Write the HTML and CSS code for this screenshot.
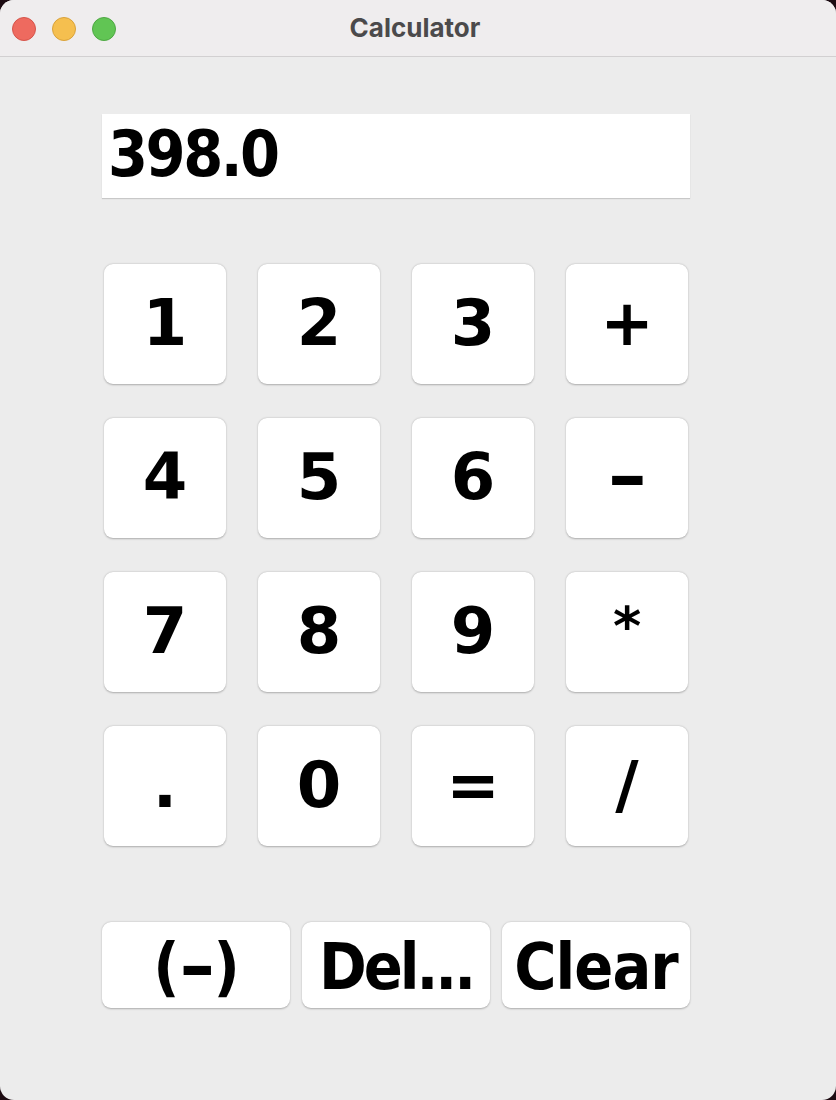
FILE: index.html
```html
<!DOCTYPE html>
<html lang="en">
<head>
<meta charset="utf-8">
<title>Calculator</title>
<link rel="stylesheet" href="styles.css">
</head>
<body>
<div class="window">
  <header class="titlebar">
    <div class="lights">
      <span class="light red"></span>
      <span class="light yellow"></span>
      <span class="light green"></span>
    </div>
    <div class="title">Calculator</div>
  </header>
  <main class="content">
    <div class="display">398.0</div>
    <div class="keypad">
      <button class="key">1</button>
      <button class="key">2</button>
      <button class="key">3</button>
      <button class="key">+</button>
      <button class="key">4</button>
      <button class="key">5</button>
      <button class="key">6</button>
      <button class="key"><span class="dash">-</span></button>
      <button class="key">7</button>
      <button class="key">8</button>
      <button class="key">9</button>
      <button class="key"><span class="star">*</span></button>
      <button class="key">.</button>
      <button class="key">0</button>
      <button class="key">=</button>
      <button class="key">/</button>
    </div>
    <div class="actions">
      <button class="action">(<span class="dash">-</span>)</button>
      <button class="action del">Del...</button>
      <button class="action">Clear</button>
    </div>
  </main>
</div>
</body>
</html>
```
FILE: styles.css
```css
html, body {
  margin: 0;
  padding: 0;
}
html {
  background: #1c0b12;
}
body {
  width: 836px;
  height: 1100px;
  overflow: hidden;
}
.window {
  width: 836px;
  height: 1100px;
  background: #ececec;
  border-radius: 14px;
  overflow: hidden;
  display: flex;
  flex-direction: column;
}
.titlebar {
  height: 56px;
  flex: none;
  background: #efedee;
  border-bottom: 1px solid #d2d0d1;
  display: flex;
  align-items: center;
  position: relative;
}
.lights {
  display: flex;
  gap: 16px;
  padding-left: 12px;
  padding-top: 1px;
}
.light {
  width: 22px;
  height: 22px;
  border-radius: 50%;
  border: 1px solid rgba(0,0,0,0.12);
}
.red { background: #ee6a5f; border-color: #d5544a; }
.yellow { background: #f5bf4f; border-color: #d9a23a; }
.green { background: #61c554; border-color: #4ea843; }
.title {
  position: absolute;
  left: 0;
  right: 0;
  top: 0;
  bottom: 0;
  display: flex;
  align-items: center;
  justify-content: center;
  font-family: "Inter", "Liberation Sans", sans-serif;
  font-weight: 700;
  font-size: 26px;
  color: #4b4a4b;
  padding-right: 6px;
  padding-bottom: 2px;
  pointer-events: none;
}
.content {
  padding: 57px 0 0 102px;
}
.display {
  width: 588px;
  height: 84px;
  box-sizing: border-box;
  background: #fff;
  box-shadow: 0 1px 1px rgba(0,0,0,0.15);
  font-family: "DejaVu Sans", sans-serif;
  font-stretch: condensed;
  font-weight: 700;
  font-size: 64px;
  line-height: 1;
  color: #000;
  padding: 8px 0 0 6px;
  letter-spacing: -2.5px;
}
.keypad {
  margin-top: 66px;
  margin-left: 2px;
  display: grid;
  grid-template-columns: repeat(4, 122px);
  grid-auto-rows: 120px;
  column-gap: 32px;
  row-gap: 34px;
}
.key, .action {
  border: none;
  margin: 0;
  background: #fff;
  border-radius: 9px;
  box-shadow: 0 0.5px 2px rgba(0,0,0,0.28);
  font-family: "DejaVu Sans", sans-serif;
  font-weight: 700;
  font-size: 64px;
  line-height: 1;
  color: #000;
  display: flex;
  align-items: center;
  justify-content: center;
  padding: 0;
}
.key {
  padding-bottom: 2px;
}
.dash {
  display: inline-block;
  transform: scaleX(1.55);
}
.star {
  display: inline-block;
  font-size: 54px;
  transform: translateY(-4px);
}
.actions {
  margin-top: 76px;
  display: grid;
  grid-template-columns: repeat(3, 188px);
  column-gap: 12px;
}
.action {
  height: 86px;
  font-stretch: condensed;
  padding-top: 4px;
  white-space: nowrap;
  letter-spacing: -1px;
}
.action .dash {
  margin: 0 6px;
}
.del {
  letter-spacing: -3px;
}
```
